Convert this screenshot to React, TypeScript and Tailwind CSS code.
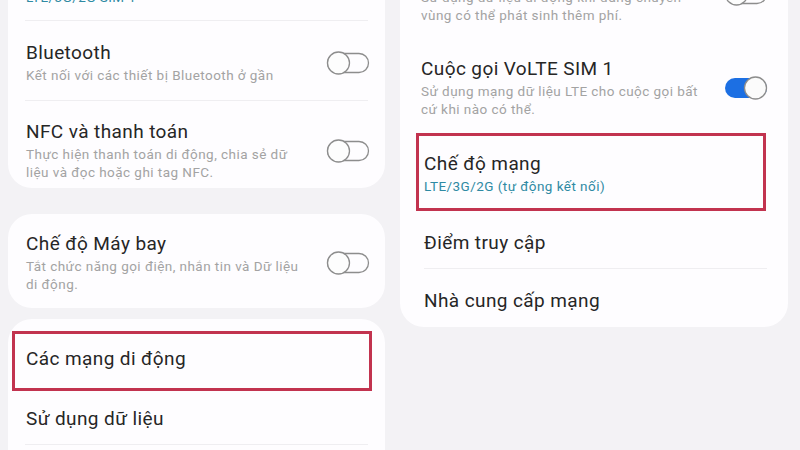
import React from 'react';

const font = { fontFamily: 'Roboto, "Noto Sans", sans-serif' };

const Toggle = ({ on = false }: { on?: boolean }) => (
  <svg width="44" height="24" viewBox="0 0 44 24" className="shrink-0">
    {on ? (
      <>
        <rect x="1" y="2" width="42" height="20" rx="10" fill="#1c6fe3" />
        <circle cx="31.5" cy="12" r="11" fill="#fbfbfb" stroke="#8d8d8d" strokeWidth="1.3" />
      </>
    ) : (
      <>
        <rect x="1.5" y="2.5" width="41" height="19" rx="9.5" fill="none" stroke="#8d8d8d" strokeWidth="1.3" />
        <circle cx="12.5" cy="12" r="11" fill="#fdfdfd" stroke="#8d8d8d" strokeWidth="1.3" />
      </>
    )}
  </svg>
);

const Title = ({ children }: { children: React.ReactNode }) => (
  <div className="text-[19px] leading-[22px] tracking-[0.4px] text-[#262626]">{children}</div>
);

const Sub = ({ children, teal = false }: { children: React.ReactNode; teal?: boolean }) => (
  <div
    className={`mt-[2px] text-[13.5px] leading-[18px] tracking-[0.45px] ${
      teal ? 'text-[#2f8aa3]' : 'text-[#a3a3a3]'
    }`}
  >
    {children}
  </div>
);

const Divider = ({ className = '' }: { className?: string }) => (
  <div className={`h-px bg-[#efeef1] ${className}`} />
);

export default function App() {
  return (
    <div className="flex h-[450px] w-[800px] overflow-hidden bg-[#f3f2f5]" style={font}>
      {/* left phone */}
      <div className="flex w-[397px] shrink-0 flex-col">
        <div className="-mt-[40px] ml-[8px] mr-[12px] rounded-b-[24px] bg-[#fefdff]">
          <div className="flex h-[60px] items-end px-[18px] pb-[14px]">
            <div className="text-[13.5px] leading-[18px] tracking-[0.45px] text-[#2f8aa3]">LTE/3G/2G SIM 1</div>
          </div>
          <Divider className="mx-[17px]" />
          <div className="flex items-center justify-between pl-[18px] pr-[15px] pt-[21px] pb-[16px]">
            <div>
              <Title>Bluetooth</Title>
              <Sub>Kết nối với các thiết bị Bluetooth ở gần</Sub>
            </div>
            <Toggle />
          </div>
          <Divider className="mx-[17px]" />
          <div className="flex items-center justify-between pl-[18px] pr-[15px] pt-[20px] pb-[7px]">
            <div>
              <Title>NFC và thanh toán</Title>
              <Sub>
                Thực hiện thanh toán di động, chia sẻ dữ
                <br />
                liệu và đọc hoặc ghi tag NFC.
              </Sub>
            </div>
            <Toggle />
          </div>
        </div>

        <div className="mt-[26px] ml-[8px] mr-[12px] rounded-[24px] bg-[#fefdff]">
          <div className="flex items-center justify-between pl-[18px] pr-[15px] pt-[19px] pb-[15px]">
            <div>
              <Title>Chế độ Máy bay</Title>
              <Sub>
                Tắt chức năng gọi điện, nhắn tin và Dữ liệu
                <br />
                di động.
              </Sub>
            </div>
            <Toggle />
          </div>
        </div>

        <div className="mt-[11px] ml-[8px] mr-[12px] rounded-t-[24px] bg-[#fefdff] pt-[12px]">
          <div className="ml-[4px] mr-[13px] flex h-[60px] items-center border-[3px] border-[#c2334f] pl-[11px] pb-[4px]">
            <Title>Các mạng di động</Title>
          </div>
          <div className="flex h-[53px] items-center pl-[18px] pt-[2px]">
            <Title>Sử dụng dữ liệu</Title>
          </div>
          <Divider className="mx-[17px]" />
          <div className="h-[40px]" />
        </div>
      </div>

      {/* right phone */}
      <div className="flex flex-1 flex-col">
        <div className="-mt-[60px] ml-[3px] mr-[12px] rounded-b-[24px] bg-[#fefdff]">
          <div className="flex items-center justify-between pl-[21px] pr-[20px] pt-[24px] pb-[16px]">
            <div>
              <Title>Chuyển vùng dữ liệu</Title>
              <Sub>
                Sử dụng dữ liệu di động khi đang chuyển
                <br />
                vùng có thể phát sinh thêm phí.
              </Sub>
            </div>
            <Toggle />
          </div>
          <div className="flex items-center justify-between pl-[21px] pr-[20px] pt-[18px] pb-[15px]">
            <div>
              <Title>Cuộc gọi VoLTE SIM 1</Title>
              <Sub>
                Sử dụng mạng dữ liệu LTE cho cuộc gọi bất
                <br />
                cứ khi nào có thể.
              </Sub>
            </div>
            <Toggle on />
          </div>
          <div className="ml-[16px] mr-[22px] border-[3px] border-[#c2334f] pl-[5px] pt-[17px] pb-[13px]">
            <Title>Chế độ mạng</Title>
            <Sub teal>LTE/3G/2G (tự động kết nối)</Sub>
          </div>
          <div className="pl-[24px] pt-[21px] pb-[14px]">
            <Title>Điểm truy cập</Title>
          </div>
          <Divider className="ml-[24px] mr-[21px]" />
          <div className="pl-[24px] pt-[21px] pb-[15px]">
            <Title>Nhà cung cấp mạng</Title>
          </div>
        </div>
      </div>
    </div>
  );
}
